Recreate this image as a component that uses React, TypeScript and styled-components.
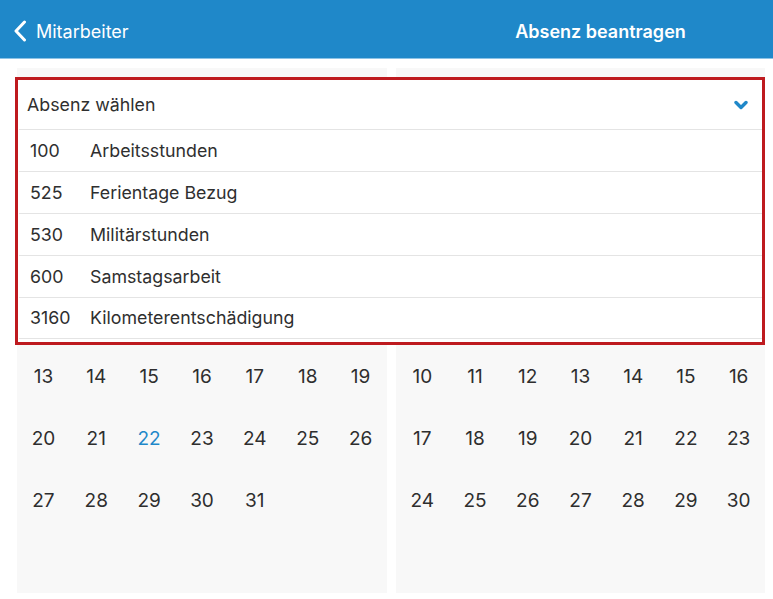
import styled, { createGlobalStyle } from "styled-components";

const GlobalStyle = createGlobalStyle`
  html, body {
    margin: 0;
    padding: 0;
    background: #ffffff;
    font-family: Inter, "Noto Sans", "Liberation Sans", sans-serif;
    -webkit-font-smoothing: antialiased;
  }
`;

const Page = styled.div`
  width: 773px;
  height: 599px;
  overflow: hidden;
  background: #ffffff;
`;

const NavBar = styled.header`
  box-sizing: border-box;
  height: 59px;
  padding-top: 4px;
  background: #1f88c9;
  border-bottom: 1px solid #8cc3e6;
  display: flex;
  align-items: center;
  color: #ffffff;
`;

const BackButton = styled.div`
  display: flex;
  align-items: center;
  gap: 9px;
  padding-left: 13px;
  font-size: 18px;
  width: 400px;
`;

const Title = styled.div`
  flex: 1;
  text-align: center;
  font-size: 18px;
  font-weight: 600;
  padding-left: 15px;
`;

const Content = styled.main`
  position: relative;
  padding: 9px 8px 0 17px;
`;

const Months = styled.div`
  display: grid;
  grid-template-columns: 370px 369px;
  gap: 9px;
`;

const MonthPanel = styled.section`
  background: #f8f8f8;
  height: 525px;
  display: flex;
  flex-direction: column;
  justify-content: flex-end;
`;

const Week = styled.div`
  display: grid;
  grid-template-columns: repeat(7, 1fr);
  height: 62px;
  align-items: center;
  justify-items: center;
`;

const Day = styled.span<{ $today?: boolean }>`
  font-size: 19px;
  color: ${(p) => (p.$today ? "#1f88c9" : "#2e2e2e")};
`;

const Dropdown = styled.div`
  position: absolute;
  left: 15px;
  top: 18px;
  width: 744px;
  border: 3.5px solid #be1a1f;
  background: #ffffff;
`;

const DropdownHead = styled.div`
  height: 49px;
  display: flex;
  align-items: center;
  justify-content: space-between;
  padding: 0 14px 0 9px;
  font-size: 17.8px;
  color: #2f2f2f;
`;

const OptionList = styled.div`
  height: 213px;
  overflow: hidden;
  padding-left: 1px;
`;

const Option = styled.div`
  box-sizing: border-box;
  height: 42px;
  padding-bottom: 1px;
  border-top: 1px solid #e4e4e4;
  display: flex;
  align-items: center;
  font-size: 17.8px;
  color: #2f2f2f;
  &:last-child {
    border-bottom: 1px solid #e4e4e4;
  }
`;

const Code = styled.span`
  width: 60px;
  padding-left: 11px;
`;

const options = [
  ["100", "Arbeitsstunden"],
  ["525", "Ferientage Bezug"],
  ["530", "Militärstunden"],
  ["600", "Samstagsarbeit"],
  ["3160", "Kilometerentschädigung"],
];

// only the weeks below the open dropdown are visible
const leftWeeks: (number | null)[][] = [
  [13, 14, 15, 16, 17, 18, 19],
  [20, 21, 22, 23, 24, 25, 26],
  [27, 28, 29, 30, 31, null, null],
  [null, null, null, null, null, null, null],
];

const rightWeeks: (number | null)[][] = [
  [10, 11, 12, 13, 14, 15, 16],
  [17, 18, 19, 20, 21, 22, 23],
  [24, 25, 26, 27, 28, 29, 30],
  [null, null, null, null, null, null, null],
];

const Month = ({ weeks, today }: { weeks: (number | null)[][]; today?: number }) => (
  <MonthPanel>
    {weeks.map((w, i) => (
      <Week key={i}>
        {w.map((d, j) => (
          <Day key={j} $today={d === today}>
            {d ?? ""}
          </Day>
        ))}
      </Week>
    ))}
  </MonthPanel>
);

export default function App() {
  return (
    <Page>
      <GlobalStyle />
      <NavBar>
        <BackButton>
          <svg width="14" height="22" viewBox="0 0 14 22">
            <polyline points="11.5,2 3,11 11.5,20" fill="none" stroke="#fff" strokeWidth="3" strokeLinecap="round" strokeLinejoin="round" />
          </svg>
          Mitarbeiter
        </BackButton>
        <Title>Absenz beantragen</Title>
      </NavBar>
      <Content>
        <Months>
          <Month weeks={leftWeeks} today={22} />
          <Month weeks={rightWeeks} />
        </Months>
        <Dropdown>
          <DropdownHead>
            Absenz wählen
            <svg width="14" height="10" viewBox="0 0 14 10">
              <polyline points="2,2.5 7,7.5 12,2.5" fill="none" stroke="#1f88c9" strokeWidth="3.4" strokeLinecap="round" strokeLinejoin="round" />
            </svg>
          </DropdownHead>
          <OptionList>
            {options.map(([code, label]) => (
              <Option key={code}>
                <Code>{code}</Code>
                {label}
              </Option>
            ))}
          </OptionList>
        </Dropdown>
      </Content>
    </Page>
  );
}
